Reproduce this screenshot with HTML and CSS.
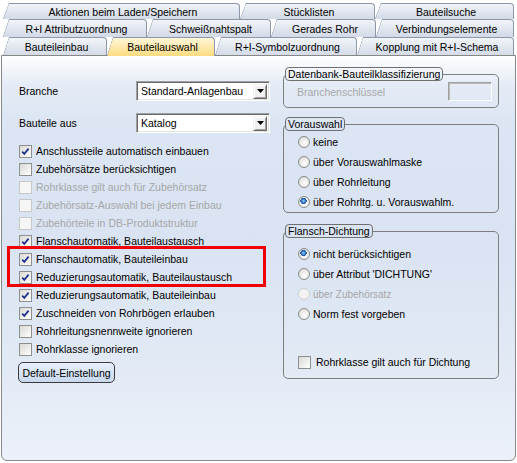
FILE: index.html
```html
<!DOCTYPE html>
<html lang="de">
<head>
<meta charset="utf-8">
<title>Bauteilauswahl</title>
<link rel="stylesheet" href="styles.css">
</head>
<body>
<div class="tabs">
  <div class="tabrow r1">
    <div class="tab first">Aktionen beim Laden/Speichern</div>
    <div class="tab">Stücklisten</div>
    <div class="tab">Bauteilsuche</div>
  </div>
  <div class="tabrow r2">
    <div class="tab first">R+I Attributzuordnung</div>
    <div class="tab">Schweißnahtspalt</div>
    <div class="tab">Gerades Rohr</div>
    <div class="tab">Verbindungselemente</div>
  </div>
  <div class="tabrow r3">
    <div class="tab first">Bauteileinbau</div>
    <div class="tab selected">Bauteilauswahl</div>
    <div class="tab">R+I-Symbolzuordnung</div>
    <div class="tab">Kopplung mit R+I-Schema</div>
  </div>
</div>
<div class="panel">
  <div class="left">
    <div class="field-row">
      <span class="field-label">Branche</span>
      <div class="combo"><span class="combo-text">Standard-Anlagenbau</span><span class="combo-btn"><svg width="7" height="4" viewBox="0 0 7 4"><path d="M0 0H7L3.5 4Z" fill="#000"/></svg></span></div>
    </div>
    <div class="field-row second">
      <span class="field-label">Bauteile aus</span>
      <div class="combo"><span class="combo-text">Katalog</span><span class="combo-btn"><svg width="7" height="4" viewBox="0 0 7 4"><path d="M0 0H7L3.5 4Z" fill="#000"/></svg></span></div>
    </div>
    <div class="checks">
      <div class="check-row"><span class="cb checked"></span>Anschlussteile automatisch einbauen</div>
      <div class="check-row"><span class="cb"></span>Zubehörsätze berücksichtigen</div>
      <div class="check-row disabled"><span class="cb"></span>Rohrklasse gilt auch für Zubehörsatz</div>
      <div class="check-row disabled"><span class="cb"></span>Zubehörsatz-Auswahl bei jedem Einbau</div>
      <div class="check-row disabled"><span class="cb"></span>Zubehörteile in DB-Produktstruktur</div>
      <div class="check-row"><span class="cb checked"></span>Flanschautomatik, Bauteilaustausch</div>
      <div class="check-row"><span class="cb checked"></span>Flanschautomatik, Bauteileinbau</div>
      <div class="check-row"><span class="cb checked"></span>Reduzierungsautomatik, Bauteilaustausch</div>
      <div class="check-row"><span class="cb checked"></span>Reduzierungsautomatik, Bauteileinbau</div>
      <div class="check-row"><span class="cb checked"></span>Zuschneiden von Rohrbögen erlauben</div>
      <div class="check-row"><span class="cb"></span>Rohrleitungsnennweite ignorieren</div>
      <div class="check-row"><span class="cb"></span>Rohrklasse ignorieren</div>
    </div>
    <button class="btn" type="button">Default-Einstellung</button>
  </div>
  <div class="right">
    <fieldset class="group g1">
      <legend>Datenbank-Bauteilklassifizierung</legend>
      <div class="key-row">
        <span class="key-label">Branchenschlüssel</span>
        <span class="key-input"></span>
      </div>
    </fieldset>
    <fieldset class="group g2">
      <legend>Vorauswahl</legend>
      <div class="radio-row"><span class="rb"></span>keine</div>
      <div class="radio-row"><span class="rb"></span>über Vorauswahlmaske</div>
      <div class="radio-row"><span class="rb"></span>über Rohrleitung</div>
      <div class="radio-row"><span class="rb on"></span>über Rohrltg. u. Vorauswahlm.</div>
    </fieldset>
    <fieldset class="group g3">
      <legend>Flansch-Dichtung</legend>
      <div class="radio-row"><span class="rb on"></span>nicht berücksichtigen</div>
      <div class="radio-row"><span class="rb"></span>über Attribut 'DICHTUNG'</div>
      <div class="radio-row disabled small"><span class="rb"></span>über Zubehörsatz</div>
      <div class="radio-row"><span class="rb"></span>Norm fest vorgeben</div>
      <div class="check-row g3check"><span class="cb"></span>Rohrklasse gilt auch für Dichtung</div>
    </fieldset>
  </div>
  <div class="highlight"></div>
</div>
</body>
</html>
```
FILE: styles.css
```css
html, body {
  margin: 0;
  padding: 0;
}
body {
  width: 517px;
  height: 463px;
  overflow: hidden;
  background: #ffffff;
  font-family: "Liberation Sans", Arial, sans-serif;
  font-size: 10.5px;
  color: #000;
}

/* ---------- tabs ---------- */
.tabs {
  padding: 3px 0 0 3px;
}
.tabrow {
  display: grid;
  height: 18px;
}
.tabrow.r1 {
  height: 16px;
  grid-template-columns: 237px 135px 139px;
}
.tabrow.r2 {
  grid-template-columns: 144px 124px 105px 138px;
}
.tabrow.r3 {
  grid-template-columns: 104px 108px 142px 157px;
}
.tab {
  position: relative;
  box-sizing: border-box;
  display: flex;
  align-items: center;
  justify-content: center;
  padding-left: 4px;
  white-space: nowrap;
  border-top: 1px solid #8c98aa;
  border-right: 1px solid #8c98aa;
  border-top-right-radius: 4px;
  background:
    linear-gradient(to bottom right, transparent calc(50% - 0.8px), #8c98aa 50%, transparent calc(50% + 0.8px)) 0 0 / 6px 100% no-repeat border-box,
    linear-gradient(#f4f6fa, #e2e7f0 50%, #d3dae6) border-box;
  clip-path: polygon(0 100%, 6px 0, 100% 0, 100% 100%);
}
.tab.selected {
  z-index: 2;
  height: 19px;
  background:
    linear-gradient(to bottom right, transparent calc(50% - 0.8px), #8c98aa 50%, transparent calc(50% + 0.8px)) 0 0 / 6px 100% no-repeat border-box,
    linear-gradient(#fff8de, #fee9ab 55%, #fcdb80) border-box;
}

/* ---------- panel ---------- */
.panel {
  position: relative;
  box-sizing: border-box;
  width: 515px;
  height: 406px;
  margin-left: 1px;
  border: 1px solid #878787;
  border-radius: 0 0 6px 6px;
  padding: 11px 0 0 17px;
  display: grid;
  grid-template-columns: 264px 216px;
  align-items: start;
  background: linear-gradient(#fdfeff 0px, #e4ebf6 30px, #dbe5f3 70px, #d9e3f2 45%, #e1e9f5 75%, #ecf1f9 100%);
}

/* ---------- left column ---------- */
.left {
  padding-top: 14px;
  display: flex;
  flex-direction: column;
  align-items: flex-start;
}
.field-row {
  display: flex;
  align-items: center;
  height: 20px;
}
.field-row.second {
  margin-top: 12px;
}
.field-label {
  width: 117px;
}
.combo {
  box-sizing: border-box;
  width: 134px;
  height: 20px;
  display: flex;
  align-items: center;
  background: #fff;
  border: 1px solid;
  border-color: #a0a0a0 #ffffff #ffffff #a0a0a0;
  box-shadow: inset 1px 1px 0 #696969, inset -1px -1px 0 #e3e3e3;
  padding: 0 2px 0 4px;
}
.combo-text {
  flex: 1;
}
.combo-btn {
  box-sizing: border-box;
  width: 14px;
  height: 15px;
  display: flex;
  align-items: center;
  justify-content: center;
  background: #f0f0f0;
  border: 1px solid;
  border-color: #f0f0f0 #696969 #696969 #f0f0f0;
  box-shadow: inset 1px 1px 0 #ffffff, inset -1px -1px 0 #a0a0a0;
}

.checks {
  margin-top: 9px;
}
.check-row {
  display: flex;
  align-items: center;
  height: 18px;
  white-space: nowrap;
}
.cb {
  box-sizing: border-box;
  width: 13px;
  height: 13px;
  margin-right: 4px;
  border: 1px solid #8e8f8f;
  background: linear-gradient(135deg, #d9d9d6 0%, #ededeb 55%, #ffffff 100%);
  flex: none;
}
.cb.checked {
  background:
    url("data:image/svg+xml,%3Csvg xmlns='http://www.w3.org/2000/svg' width='11' height='11' viewBox='0 0 11 11'%3E%3Cpath d='M2.2 5.6 L4.3 7.9 L8.6 2.6' fill='none' stroke='%2321308a' stroke-width='1.7'/%3E%3C/svg%3E") center / 11px 11px no-repeat,
    linear-gradient(135deg, #d9d9d6 0%, #ededeb 55%, #ffffff 100%);
}
.disabled {
  color: #a7a7a7;
}
.disabled .cb {
  border-color: #c8c8c8;
  background: #f6f6f6;
}

.btn {
  box-sizing: border-box;
  margin: 4px 0 0 -1px;
  width: 97px;
  height: 21px;
  padding: 0;
  font: inherit;
  color: #000;
  border: 1px solid #3a3a3a;
  border-radius: 5px;
  background: linear-gradient(#e9f1fa, #d6e3f3 50%, #c9d9ee);
}

/* ---------- right column ---------- */
.right {
  display: flex;
  flex-direction: column;
}
.group {
  margin: 0;
  padding: 0;
  min-width: 0;
  border: 1px solid #7e7e7e;
  border-radius: 5px;
}
.group legend {
  margin-left: 1px;
  padding: 0 2px;
  line-height: 12px;
  border: 1px solid #6f6f6f;
  border-radius: 4px;
}
.key-row {
  display: flex;
  align-items: center;
  height: 19px;
  margin-top: 1px;
  padding: 0 6px 6px 13px;
}
.key-label {
  flex: 1;
  color: #a7a7a7;
}
.key-input {
  box-sizing: border-box;
  width: 44px;
  height: 19px;
  border: 1px solid;
  border-color: #a0a0a0 #ffffff #ffffff #a0a0a0;
  box-shadow: inset 1px 1px 0 #b9b9b9;
}
.g2 {
  margin-top: 9px;
  padding-top: 1px;
}
.g3 {
  margin-top: 11px;
  padding: 6px 0 6px 0;
}
.radio-row {
  display: flex;
  align-items: center;
  height: 20px;
  padding-left: 14px;
  white-space: nowrap;
}
.radio-row.small {
  font-size: 10px;
}
.rb {
  box-sizing: border-box;
  width: 12px;
  height: 12px;
  margin-right: 3px;
  border-radius: 50%;
  border: 1px solid #8b8c8c;
  background: radial-gradient(circle at 60% 65%, #ffffff 0%, #f1f1ef 35%, #d2d2cf 100%);
  flex: none;
}
.rb.on {
  background:
    radial-gradient(circle at 45% 40%, #a9d3f7 0, #3d86cf 1.6px, #1a4d95 3px, transparent 3.3px),
    radial-gradient(circle at 60% 65%, #ffffff 0%, #f1f1ef 35%, #d2d2cf 100%);
}
.disabled .rb {
  border-color: #cfcfcf;
  background: #f3f3f3;
}
.g3check {
  height: 20px;
  margin-top: 28px;
  padding-left: 14px;
}
.g3check .cb {
  margin-right: 5px;
}

/* ---------- annotation ---------- */
.highlight {
  position: absolute;
  left: 5px;
  top: 190px;
  width: 259px;
  height: 41px;
  box-sizing: border-box;
  border: 3px solid #f00000;
}
```
